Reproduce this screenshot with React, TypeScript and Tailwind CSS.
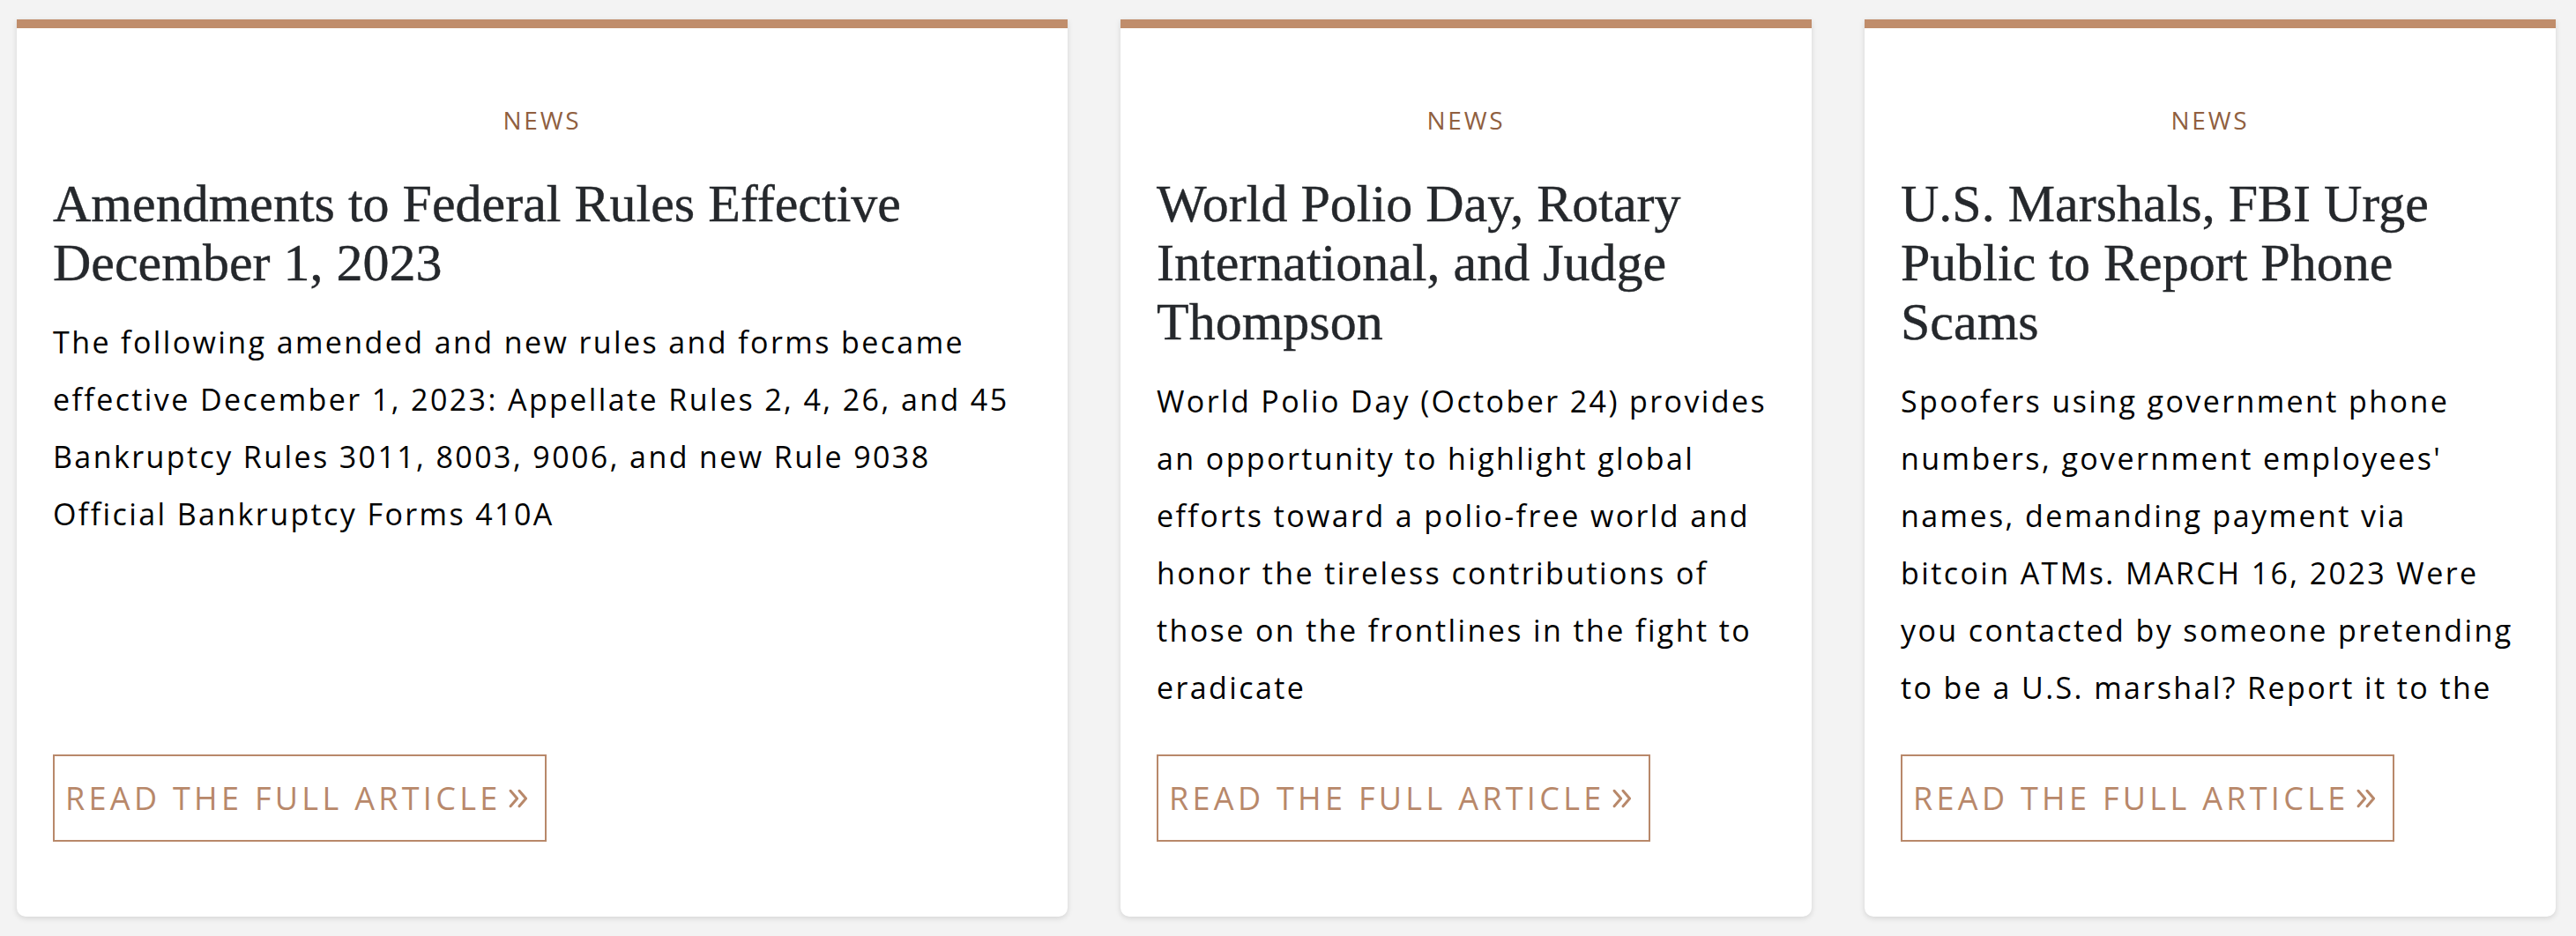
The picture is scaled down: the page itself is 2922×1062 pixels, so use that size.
import React from "react";

type Card = { w: string; title: string[]; body: string[] };

const cards: Card[] = [
  {
    w: "w-[1192px]",
    title: ["Amendments to Federal Rules Effective", "December 1, 2023"],
    body: [
      "The following amended and new rules and forms became",
      "effective December 1, 2023: Appellate Rules 2, 4, 26, and 45",
      "Bankruptcy Rules 3011, 8003, 9006, and new Rule 9038",
      "Official Bankruptcy Forms 410A",
    ],
  },
  {
    w: "w-[784px]",
    title: ["World Polio Day, Rotary", "International, and Judge", "Thompson"],
    body: [
      "World Polio Day (October 24) provides",
      "an opportunity to highlight global",
      "efforts toward a polio-free world and",
      "honor the tireless contributions of",
      "those on the frontlines in the fight to",
      "eradicate",
    ],
  },
  {
    w: "w-[784px]",
    title: ["U.S. Marshals, FBI Urge", "Public to Report Phone", "Scams"],
    body: [
      "Spoofers using government phone",
      "numbers, government employees'",
      "names, demanding payment via",
      "bitcoin ATMs. MARCH 16, 2023 Were",
      "you contacted by someone pretending",
      "to be a U.S. marshal? Report it to the",
    ],
  },
];

function Chevrons() {
  return (
    <svg width="28" height="28" viewBox="0 0 24 24" fill="none" stroke="currentColor" strokeWidth="2.6" strokeLinecap="round" strokeLinejoin="round">
      <polyline points="3.5 4.5 10 12 3.5 19.5" />
      <polyline points="12 4.5 18.5 12 12 19.5" />
    </svg>
  );
}

export default function App() {
  return (
    <div className="min-h-screen w-full bg-[#f3f3f3] pt-[22px] pl-[19px]">
      <div className="flex gap-[60px] items-stretch">
        {cards.map((c, i) => (
          <div
            key={i}
            className={`${c.w} h-[1018px] flex flex-col bg-white border-t-[10px] border-[#c08d6b] rounded-b-[10px] shadow-[0_2px_6px_rgba(0,0,0,0.13)] px-[41px] pt-[83px] pb-[85px]`}
          >
            <div className="text-center text-[28px] leading-[42px] tracking-[0.1em] text-[#905f3f] font-['Open_Sans',sans-serif]">
              NEWS
            </div>
            <h2 className="mt-[41px] text-[60px] leading-[67px] text-[#25282c] font-['Liberation_Serif',serif] [-webkit-text-stroke:0.4px_#25282c]">
              {c.title.map((t, j) => (
                <span key={j} className="block whitespace-nowrap">
                  {t}
                </span>
              ))}
            </h2>
            <p className="mt-[24px] text-[34px] leading-[65px] tracking-[2.4px] text-black font-['Open_Sans',sans-serif]">
              {c.body.map((t, j) => (
                <span key={j} className="block whitespace-nowrap">
                  {t}
                </span>
              ))}
            </p>
            <div className="mt-auto">
              <a className="flex items-center gap-[6px] w-[560px] h-[99px] border-2 border-[#b8886a] pl-[12px] text-[36px] tracking-[4.3px] text-[#b8886a] font-['Open_Sans',sans-serif] whitespace-nowrap">
                <span>READ THE FULL ARTICLE</span>
                <Chevrons />
              </a>
            </div>
          </div>
        ))}
      </div>
    </div>
  );
}
